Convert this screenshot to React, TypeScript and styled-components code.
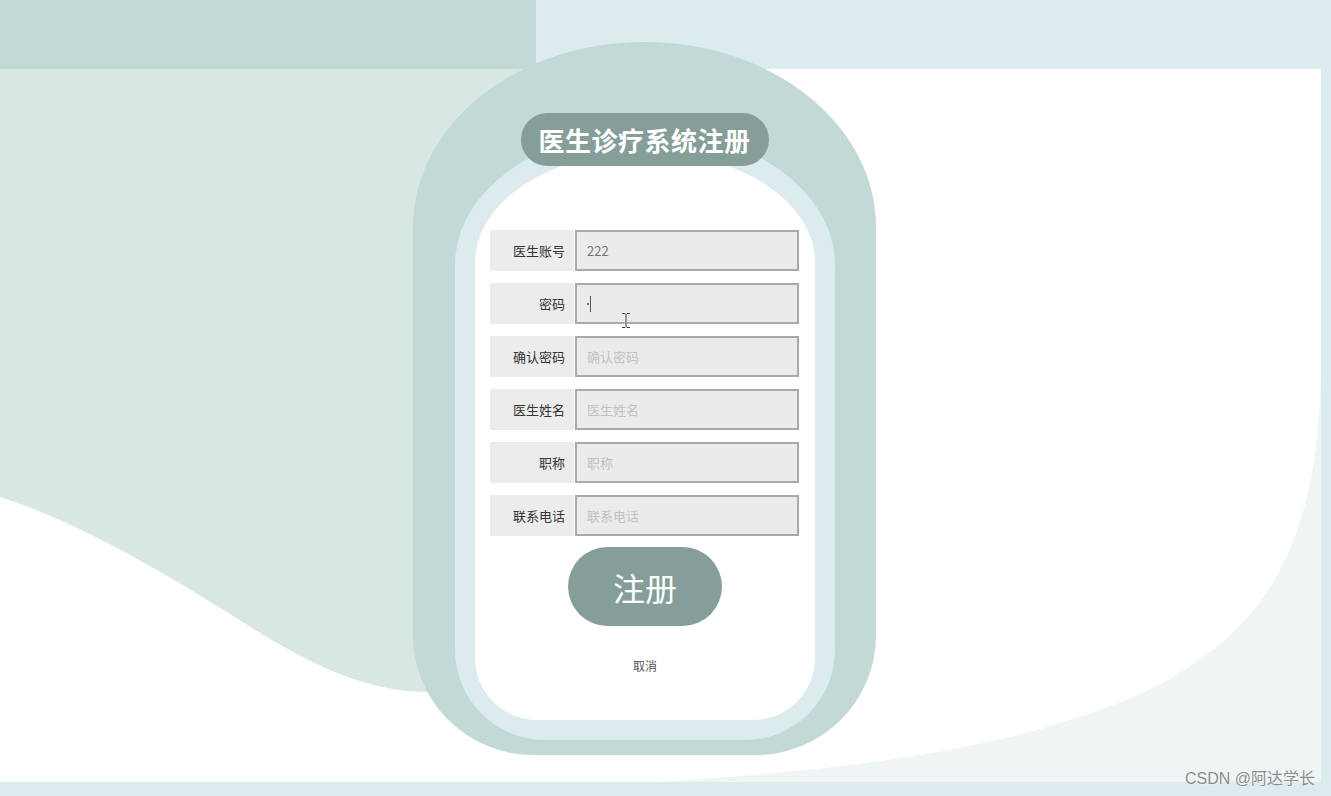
import React from "react";
import styled, { createGlobalStyle } from "styled-components";

const GlobalStyle = createGlobalStyle`
  html, body {
    margin: 0;
    padding: 0;
    overflow: hidden;
    background: #dcebed;
  }
  * {
    box-sizing: border-box;
  }
`;

const cjk = `"Noto Sans CJK SC", "Noto Sans", sans-serif`;

const fields = [
  { label: "医生账号", value: "222", placeholder: "医生账号" },
  { label: "密码", value: "", placeholder: "", type: "password", focused: true },
  { label: "确认密码", value: "", placeholder: "确认密码" },
  { label: "医生姓名", value: "", placeholder: "医生姓名" },
  { label: "职称", value: "", placeholder: "职称" },
  { label: "联系电话", value: "", placeholder: "联系电话" },
];

export default function App() {
  return (
    <>
      <GlobalStyle />
      <Stage>
        <TopBand>
          <DarkBlock />
        </TopBand>
        <Page>
          <Backdrop viewBox="0 0 1321 713" preserveAspectRatio="none">
            <path
              d="M0 0 H700 V623 H430 C360 623 300 590 230 545 C150 495 70 450 0 428 Z"
              fill="#d8e7e3"
            />
            <path
              d="M1321 290 C1321 490 1255 565 1155 618 C1020 682 850 700 660 713 H1321 Z"
              fill="#eef5f4"
            />
          </Backdrop>
          <Arch>
            <TitlePill>医生诊疗系统注册</TitlePill>
            <Ring>
              <Panel>
                <Form>
                  {fields.map((f) => (
                    <Row key={f.label}>
                      <Label>{f.label}</Label>
                      <Field
                        type={f.type ?? "text"}
                        defaultValue={f.value}
                        placeholder={f.placeholder}
                        readOnly
                      />
                      {f.focused && (
                        <>
                          <Caret />
                          <Pointer width="12" height="17" viewBox="0 0 12 17">
                            <path
                              d="M2 1.5h3M7 1.5h3M6 1.5v14M2 15.5h3M7 15.5h3"
                              stroke="#fff"
                              strokeWidth="2.6"
                              fill="none"
                            />
                            <path
                              d="M2 1.5h3M7 1.5h3M6 1.5v14M2 15.5h3M7 15.5h3"
                              stroke="#3a3a3a"
                              strokeWidth="1.1"
                              fill="none"
                            />
                          </Pointer>
                        </>
                      )}
                    </Row>
                  ))}
                </Form>
                <SubmitButton>注册</SubmitButton>
                <CancelLink>取消</CancelLink>
              </Panel>
            </Ring>
          </Arch>
        </Page>
        <Watermark>CSDN @阿达学长</Watermark>
      </Stage>
    </>
  );
}

const Stage = styled.div`
  position: relative;
  width: 1331px;
  height: 796px;
  display: flex;
  flex-direction: column;
  background: #dcebed;
  font-family: ${cjk};
  overflow: hidden;
`;

const TopBand = styled.div`
  height: 69px;
  display: flex;
  flex-shrink: 0;
`;

const DarkBlock = styled.div`
  width: 536px;
  height: 100%;
  background: #c3d9d5;
`;

const Page = styled.div`
  position: relative;
  width: 1321px;
  height: 713px;
  flex-shrink: 0;
  background: #ffffff;
  display: flex;
  align-items: flex-start;
  padding-left: 413px;
`;

const Backdrop = styled.svg`
  position: absolute;
  inset: 0;
  width: 100%;
  height: 100%;
  z-index: 0;
`;

const Arch = styled.div`
  position: relative;
  z-index: 1;
  margin-top: -27px;
  width: 463px;
  height: 713px;
  padding: 88px 41px 15px 42px;
  background: #c2d9d5;
  border-top-left-radius: 231px 185px;
  border-top-right-radius: 231px 185px;
  border-bottom-left-radius: 120px;
  border-bottom-right-radius: 120px;
`;

const TitlePill = styled.div`
  position: absolute;
  z-index: 2;
  top: 71px;
  left: 50%;
  transform: translateX(-50%);
  height: 53px;
  padding: 0 18px;
  display: flex;
  align-items: center;
  white-space: nowrap;
  background: #869e99;
  border-radius: 27px;
  color: #ffffff;
  font-size: 26px;
  font-weight: 700;
  letter-spacing: 0.5px;
`;

const Ring = styled.div`
  width: 380px;
  height: 610px;
  padding: 22px 20px 20px 20px;
  background: #dcebed;
  border-top-left-radius: 190px 135px;
  border-top-right-radius: 190px 135px;
  border-bottom-left-radius: 90px;
  border-bottom-right-radius: 90px;
`;

const Panel = styled.div`
  width: 340px;
  height: 568px;
  padding-top: 78px;
  display: flex;
  flex-direction: column;
  align-items: center;
  background: #ffffff;
  border-top-left-radius: 170px 110px;
  border-top-right-radius: 170px 110px;
  border-bottom-left-radius: 62px;
  border-bottom-right-radius: 62px;
`;

const Form = styled.div`
  align-self: flex-start;
  margin-left: 15px;
  display: flex;
  flex-direction: column;
  gap: 12px;
`;

const Row = styled.div`
  position: relative;
  display: flex;
  gap: 1px;
  height: 41px;
`;

const Label = styled.div`
  width: 84px;
  height: 41px;
  padding-right: 9px;
  background: #ececec;
  color: #333333;
  font-size: 13px;
  line-height: 41px;
  text-align: right;
`;

const Field = styled.input`
  width: 224px;
  height: 41px;
  margin: 0;
  padding: 0 0 0 10px;
  border: 2px solid #a9a9a9;
  border-radius: 0;
  outline: none;
  background: #ebebeb;
  color: #777777;
  font-family: ${cjk};
  font-size: 13px;

  &::placeholder {
    color: #c2c2c2;
  }
`;

const Caret = styled.span`
  position: absolute;
  left: 100px;
  top: 13px;
  width: 1px;
  height: 16px;
  background: #555555;

  &::before {
    content: "";
    position: absolute;
    left: -3px;
    top: 7px;
    width: 2px;
    height: 2px;
    background: #777777;
  }
`;

const Pointer = styled.svg`
  position: absolute;
  left: 130px;
  top: 29px;
`;

const SubmitButton = styled.button`
  margin-top: 11px;
  width: 154px;
  height: 79px;
  border: none;
  border-radius: 40px;
  background: #869e99;
  color: #ffffff;
  font-family: ${cjk};
  font-size: 32px;
  font-weight: 400;
  cursor: pointer;
`;

const CancelLink = styled.div`
  margin-top: 32px;
  color: #555555;
  font-size: 12px;
  line-height: 16px;
`;

const Watermark = styled.div`
  position: absolute;
  right: 16px;
  bottom: 8px;
  color: #8c8c8c;
  font-family: "Liberation Sans", "Noto Sans CJK SC", sans-serif;
  font-size: 16px;
  line-height: 18px;
  text-shadow: 0 0 2px #ffffff;
  z-index: 3;
`;
